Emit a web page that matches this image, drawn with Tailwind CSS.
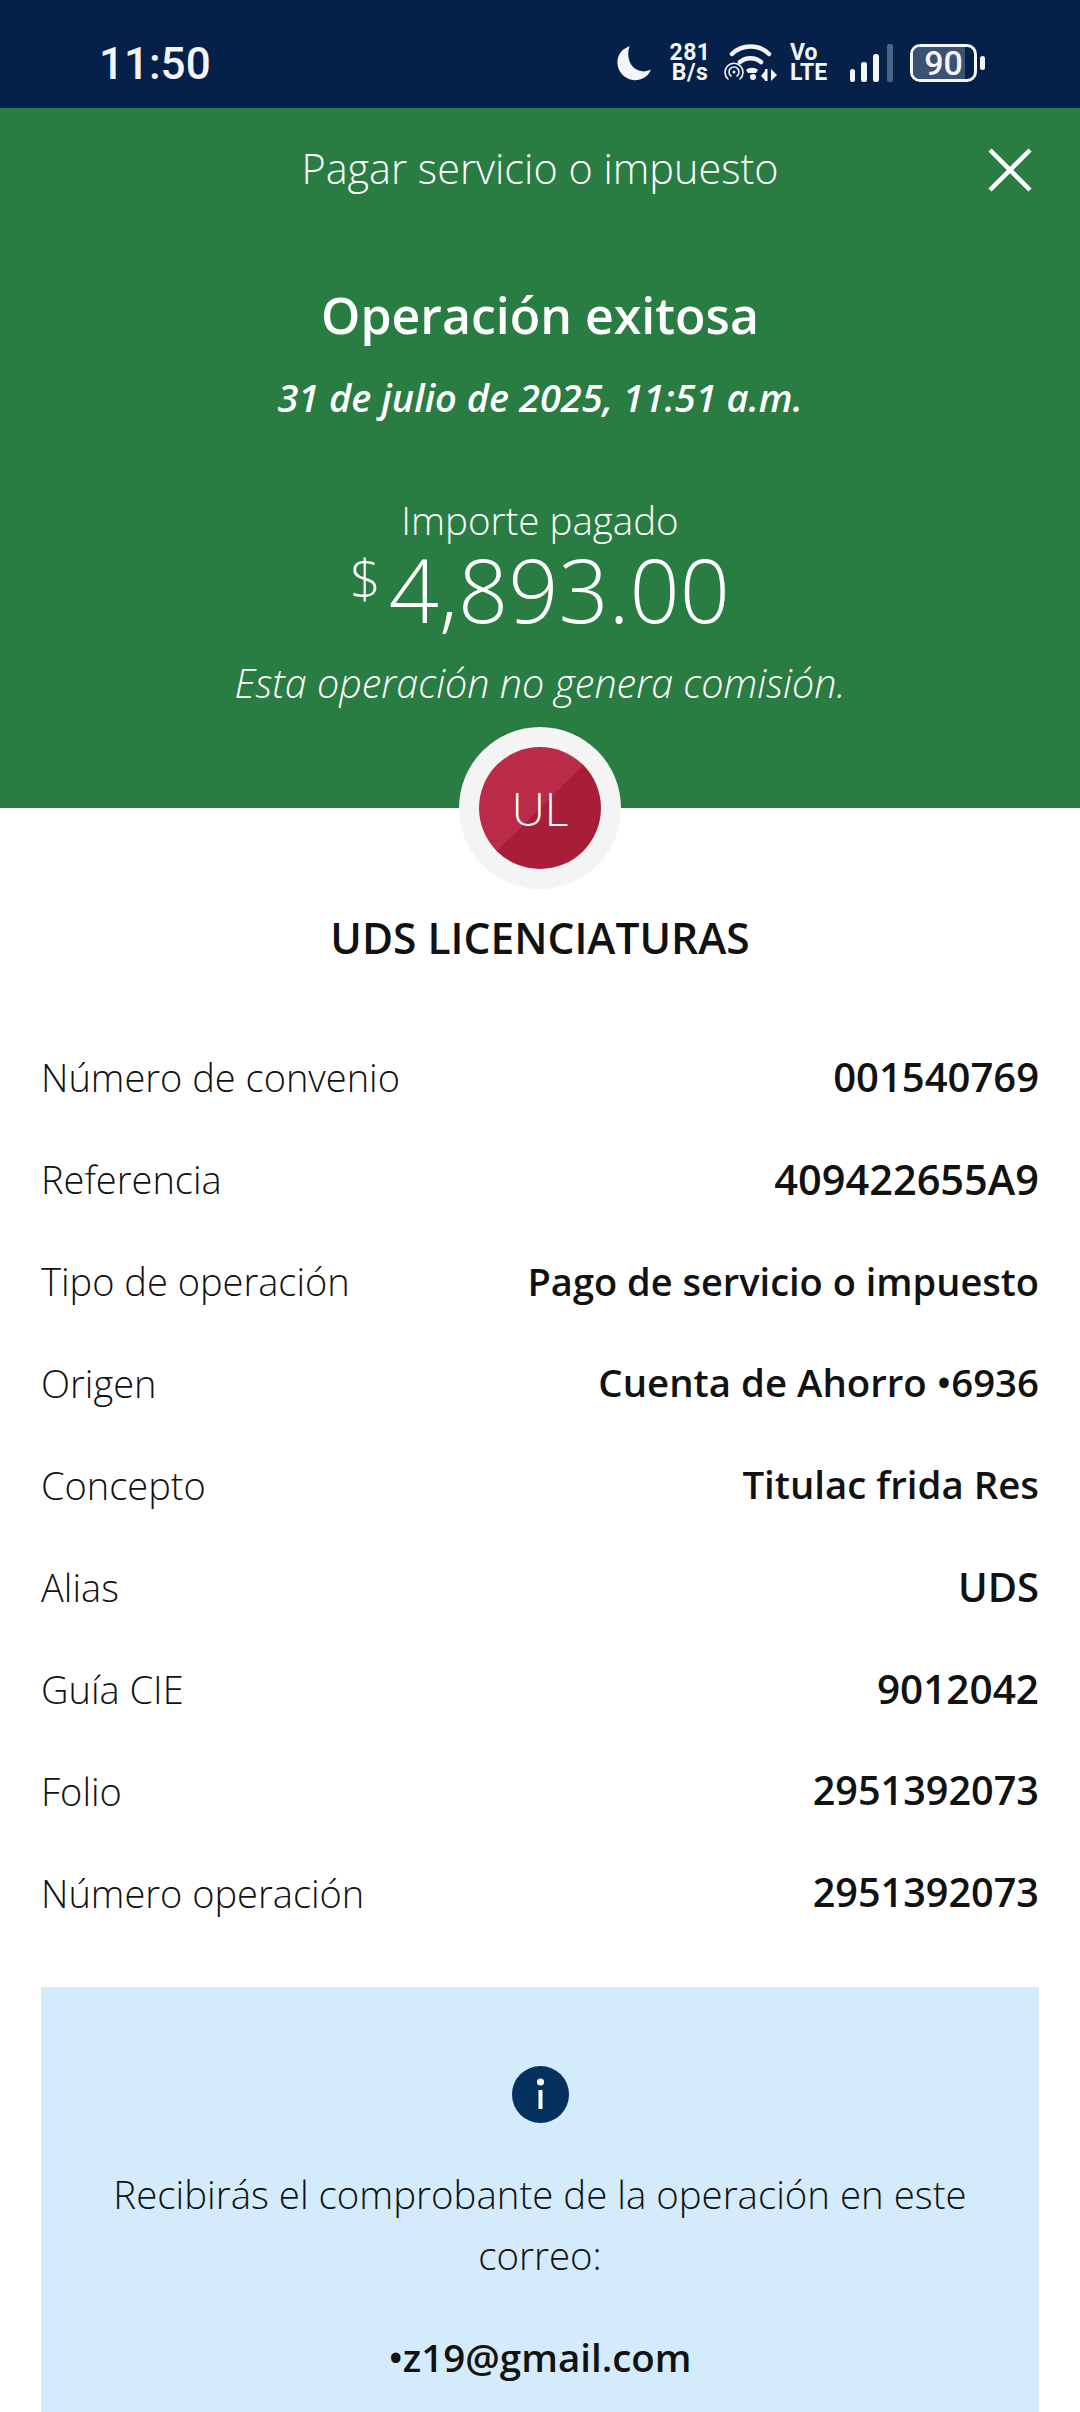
<!DOCTYPE html>
<html lang="es">
<head>
<meta charset="UTF-8">
<meta name="viewport" content="width=device-width, initial-scale=1.0">
<title>Pagar servicio o impuesto</title>
<script src="https://cdn.jsdelivr.net/npm/@tailwindcss/browser@4"></script>
</head>
<body class="bg-white font-['Open_Sans',sans-serif] overflow-hidden">
<div class="w-[1080px] h-[2412px] overflow-hidden flex flex-col">
  <!-- status bar -->
  <div class="h-[108px] bg-[#05214a] text-[#f3f5f9] flex items-center pt-[18px] pl-[99px] pr-[95px] font-['Roboto',sans-serif]">
    <span class="text-[44px] leading-none font-medium pt-[2px]">11:50</span>
    <div class="ml-auto flex items-center h-[40px]">
      <svg class="w-[37px] h-[37px]" viewBox="0 0 38 38"><path fill="#f3f5f9" d="M15 1C5 5 1 13 3 22c2 9 11 15 20 14 7-1 12-5 14-11-5 3-12 3-17-1C14 19 12 9 15 1z"/></svg>
      <div class="ml-[17px] w-[42px] text-[23px] leading-[20px] font-bold text-center tracking-[.5px]">281<br>B/s</div>
      <svg class="ml-[13px] w-[54px] h-[38px]" viewBox="0 0 54 38" fill="none" stroke="#f3f5f9" stroke-linecap="round">
        <path stroke-width="4.500" d="M8 10C18 0 35 0 45 10"/>
        <path stroke-width="4.500" d="M16 18c6-5 15-5 21 0"/>
        <path stroke-width="1.600" d="M4 35a9 9 0 1 1 12 0"/>
        <path stroke-width="1.600" d="M7 32a5 5 0 1 1 6 0"/>
        <circle cx="10" cy="28" r="1.500" fill="#f3f5f9" stroke="none"/>
        <path fill="#f3f5f9" stroke="none" d="M22 26c3-3 9-3 12 0l-2 3h-8z"/>
        <circle cx="29" cy="33" r="3" fill="#f3f5f9" stroke="none"/>
        <path fill="#f3f5f9" stroke="none" d="M41 25v12h2.500V25zM37 32l4-5v9zM47 25v12l6-6z"/>
      </svg>
      <div class="ml-[12px] w-[40px] text-[23px] leading-[20px] font-bold">Vo<br>LTE</div>
      <svg class="ml-[20px] w-[44px] h-[38px]" viewBox="0 0 44 38" fill="#f3f5f9">
        <rect x="0" y="25" width="5" height="13" rx="2.500"/><rect x="11" y="18" width="6" height="20" rx="2.500"/><rect x="23" y="10" width="6" height="28" rx="2.500"/><rect x="37" y="0" width="6" height="38" rx="2" fill="#4b6384"/>
      </svg>
      <div class="ml-[16px] w-[67px] h-[38px] rounded-[10px] border-[3px] border-[#f3f5f9] overflow-hidden relative flex items-center justify-center">
        <div class="absolute left-0 top-0 bottom-0 w-[85%] bg-[#3d5173]"></div>
        <span class="relative text-[34px] leading-none font-medium">90</span>
      </div>
      <div class="ml-[3px] w-[5px] h-[14px] rounded-full bg-[#f3f5f9]"></div>
    </div>
  </div>

  <!-- green header -->
  <div class="h-[700px] bg-[#297c42] text-white relative flex flex-col items-center">
    <div class="mt-[34px] text-[41.400px] leading-[52px] font-light">Pagar servicio o impuesto</div>
    <svg class="absolute right-[48px] top-[40px] w-[44px] h-[44px]" viewBox="0 0 44 44" stroke="white" stroke-width="4.500"><path d="M2 2l40 40M42 2L2 42"/></svg>
    <div class="mt-[90px] text-[50px] leading-[62px] font-semibold">Operación exitosa</div>
    <div class="mt-[27px] text-[38px] leading-[48px] font-semibold italic">31 de julio de 2025, 11:51 a.m.</div>
    <div class="mt-[77px] text-[38.500px] leading-[44px] font-light">Importe pagado</div>
    <div class="flex items-start mt-[9px]">
      <span class="text-[54px] leading-[60px] font-light mr-[8px] -mt-[4px]">$</span>
      <span class="text-[88px] leading-[76px] font-light">4,893.00</span>
    </div>
    <div class="mt-[32px] text-[39.500px] leading-[48px] font-light italic">Esta operación no genera comisión.</div>
    <!-- avatar overlapping the green edge -->
    <div class="absolute left-[459px] bottom-[-81px] w-[162px] h-[162px] rounded-full bg-[#f4f4f4] flex items-center justify-center z-10">
      <div class="w-[122px] h-[122px] rounded-full bg-[linear-gradient(135deg,#b92b49_50%,#a81d37_50%)] flex items-center justify-center text-[46px] font-light text-white">UL</div>
    </div>
  </div>

  <!-- name -->
  <div class="mt-[105px] text-center text-[42.500px] leading-[50px] font-semibold text-[#121212]">UDS LICENCIATURAS</div>

  <!-- detail rows -->
  <div class="mt-[63px] px-[41px] text-[#121212] text-[38px]">
    <div class="h-[102px] flex items-center justify-between"><span class="font-light">Número de convenio</span><span class="font-semibold text-[40px]">001540769</span></div>
    <div class="h-[102px] flex items-center justify-between"><span class="font-light">Referencia</span><span class="font-semibold text-[41.500px]">409422655A9</span></div>
    <div class="h-[102px] flex items-center justify-between"><span class="font-light">Tipo de operación</span><span class="font-semibold">Pago de servicio o impuesto</span></div>
    <div class="h-[102px] flex items-center justify-between"><span class="font-light">Origen</span><span class="font-semibold text-[38.400px]">Cuenta de Ahorro •6936</span></div>
    <div class="h-[102px] flex items-center justify-between"><span class="font-light">Concepto</span><span class="font-semibold text-[38.400px]">Titulac frida Res</span></div>
    <div class="h-[102px] flex items-center justify-between"><span class="font-light">Alias</span><span class="font-semibold text-[40px]">UDS</span></div>
    <div class="h-[102px] flex items-center justify-between"><span class="font-light">Guía CIE</span><span class="font-semibold text-[40.500px]">9012042</span></div>
    <div class="h-[102px] flex items-center justify-between"><span class="font-light">Folio</span><span class="font-semibold text-[39.600px]">2951392073</span></div>
    <div class="h-[102px] flex items-center justify-between"><span class="font-light">Número operación</span><span class="font-semibold text-[39.600px]">2951392073</span></div>
  </div>

  <!-- info box -->
  <div class="mt-[43px] mx-[41px] bg-[#d3ebfb] flex-1 flex flex-col items-center text-[#121212] px-[60px]">
    <svg class="mt-[79px] w-[57px] h-[57px]" viewBox="0 0 57 57"><circle cx="28.500" cy="28.500" r="28.500" fill="#05315f"/><circle cx="28.500" cy="16" r="3.500" fill="white"/><rect x="26.500" y="24" width="4" height="19" fill="white"/></svg>
    <div class="mt-[41px] text-[38.400px] leading-[61px] font-light text-center">Recibirás el comprobante de la operación en este correo:</div>
    <div class="mt-[47px] text-[38.500px] leading-[48px] font-semibold">•z19@gmail.com</div>
  </div>
</div>
</body>
</html>
